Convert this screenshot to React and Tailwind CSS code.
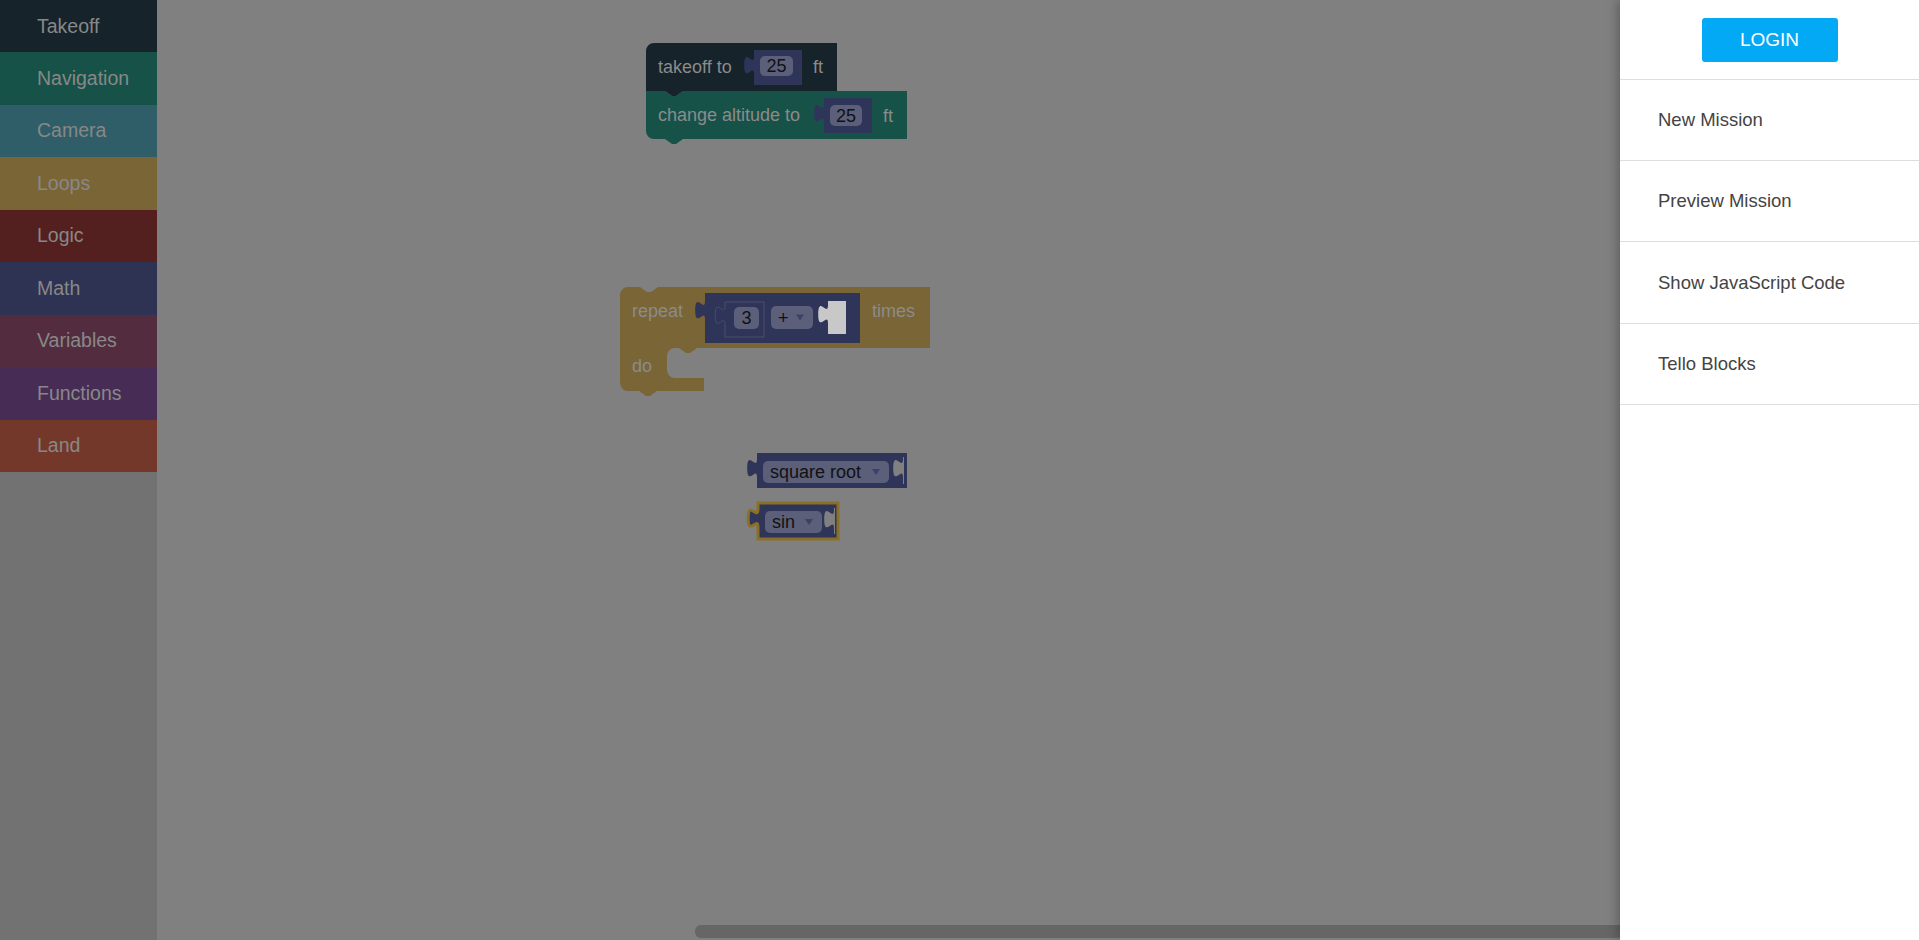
import React from 'react';

const categories = [
  { name: 'Takeoff', bg: 'bg-[#16232a]' },
  { name: 'Navigation', bg: 'bg-[#175249]' },
  { name: 'Camera', bg: 'bg-[#2f5e69]' },
  { name: 'Loops', bg: 'bg-[#7a6537]' },
  { name: 'Logic', bg: 'bg-[#531f1f]' },
  { name: 'Math', bg: 'bg-[#2f3353]' },
  { name: 'Variables', bg: 'bg-[#532d3f]' },
  { name: 'Functions', bg: 'bg-[#472d55]' },
  { name: 'Land', bg: 'bg-[#74382a]' },
];

const menuItems = ['New Mission', 'Preview Mission', 'Show JavaScript Code', 'Tello Blocks'];

const MATH = '#2f3459';
const FIELD = '#5c5f7a';
const LABEL = '#8b8b8b';

// value block outline with the puzzle tab on its left edge
const valuePath = (x, y, w, h, t = 6) =>
  `M${x},${y} V${y + t} c0,12.2 -9.8,-9.8 -9.8,9.2 s9.8,-3 9.8,9.2 V${y + h} H${x + w} V${y} Z`;

const Field = ({ x, y, w, h, text, dropdown }) => (
  <g>
    <rect x={x} y={y} width={w} height={h} rx="5" fill={FIELD} />
    <text x={dropdown ? x + 7 : x + w / 2} y={y + h / 2 + 6.3} textAnchor={dropdown ? 'start' : 'middle'} fill="#111" fontSize="18">
      {text}
    </text>
    {dropdown && <path d={`M${x + w - 17},${y + h / 2 - 3} h8 l-4,6 Z`} fill="#3d4168" />}
  </g>
);

const Label = ({ x, y, children }) => (
  <text x={x} y={y} fill={LABEL} fontSize="18">{children}</text>
);

const Workspace = () => (
  <svg className="absolute inset-0" width="1762" height="940" viewBox="157 0 1762 940" style={{ fontFamily: '"Liberation Sans", Arial, sans-serif' }}>
    {/* change altitude */}
    <path d="M646,91 H665 l7,5 h4 l7,-5 H907 V139 H683 l-7,5 h-4 l-7,-5 H654 A8,8 0 0 1 646,131 Z" fill="#175249" />
    <Label x={658} y={121}>change altitude to</Label>
    <path d={valuePath(824, 98, 48, 35)} fill={MATH} />
    <Field x={830} y={105} w={32} h={21} text="25" />
    <Label x={883} y={122}>ft</Label>

    {/* takeoff */}
    <path d="M646,51 A8,8 0 0 1 654,43 H837 V91 H683 l-7,5 h-4 l-7,-5 H646 Z" fill="#16232a" />
    <Label x={658} y={73}>takeoff to</Label>
    <path d={valuePath(754, 50, 48, 35)} fill={MATH} />
    <Field x={760} y={56} w={33} h={20} text="25" />
    <Label x={813} y={73}>ft</Label>

    {/* repeat */}
    <path
      d="M620,295 A8,8 0 0 1 628,287 H640 l7,5 h4 l7,-5 H930 V348 H697 l-7,5 h-4 l-7,-5 H675 A8,8 0 0 0 667,356 V370 A8,8 0 0 0 675,378 H704 V391 H657 l-7,5 h-4 l-7,-5 H628 A8,8 0 0 1 620,383 Z"
      fill="#7a6537"
    />
    <Label x={632} y={317}>repeat</Label>
    <Label x={872} y={317}>times</Label>
    <Label x={632} y={372}>do</Label>
    <path d={valuePath(705, 293, 155, 50, 8)} fill={MATH} />
    <path d={valuePath(725, 302, 39, 35, 4)} fill={MATH} stroke="#4a4d6a" strokeWidth="1" />
    <Field x={734} y={307} w={25} h={22} text="3" />
    <Field x={771} y={306} w={42} h={23} text="+" dropdown />
    <path d={valuePath(828, 301, 18, 33, 4)} fill="#c8c8c8" />

    {/* square root */}
    <path d={valuePath(757, 453, 150, 35, 6)} fill={MATH} />
    <Field x={763} y={461} w={126} h={22} text="square root" dropdown />
    <path d={valuePath(903, 457, 1, 27, 2)} fill="#808080" />

    {/* sin (selected) */}
    <path d={valuePath(758, 503, 80, 36, 6)} fill={MATH} stroke="#8a7027" strokeWidth="3" />
    <Field x={765} y={511} w={57} h={22} text="sin" dropdown />
    <path d={valuePath(834, 508, 1, 26, 2)} fill="#808080" />
  </svg>
);

const App = () => {
  return (
    <div className="relative flex h-[940px] w-full overflow-hidden bg-[#808080] font-['Liberation_Sans',Arial,sans-serif]">
      {/* Toolbox */}
      <div className="flex w-[157px] shrink-0 flex-col bg-[#727272]">
        {categories.map((c) => (
          <div key={c.name} className={`flex h-[52.45px] items-center pl-[37px] text-[19.5px] text-[#888888] ${c.bg}`}>
            {c.name}
          </div>
        ))}
      </div>

      {/* Workspace */}
      <div className="relative flex-1">
        <Workspace />
        <div className="absolute bottom-[2px] left-[538px] h-[13px] w-[1300px] rounded-l-md bg-[#666666]" />
      </div>

      {/* Drawer */}
      <div className="absolute right-0 top-0 flex h-full w-[299px] flex-col bg-white shadow-[-3px_0_10px_rgba(0,0,0,0.25)]">
        <div className="flex h-[80px] shrink-0 items-start justify-center border-b border-[#dddddd] pt-[18px]">
          <button className="h-[44px] w-[136px] rounded-[3px] bg-[#03a9f4] text-[19px] font-medium text-white">
            LOGIN
          </button>
        </div>
        {menuItems.map((item) => (
          <div key={item} className="flex h-[81.2px] shrink-0 items-center border-b border-[#dddddd] pl-[38px] text-[18.5px] text-[#444444]">
            {item}
          </div>
        ))}
      </div>
    </div>
  );
};

export default App;
